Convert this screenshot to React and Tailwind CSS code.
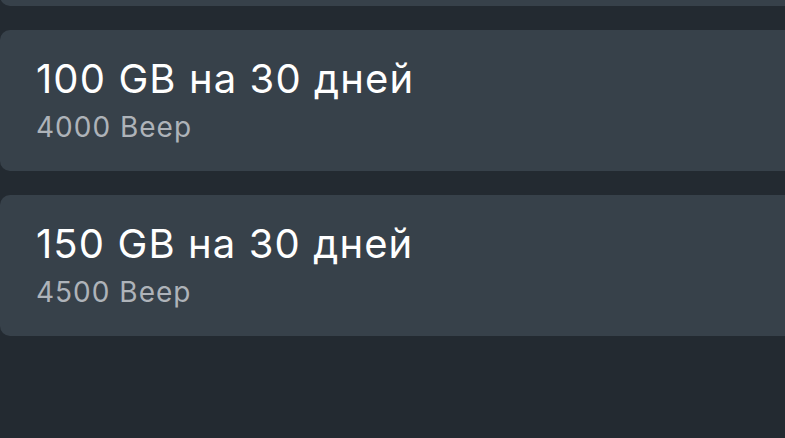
export default function App() {
  const items = [
    { title: "100 GB на 30 дней", price: "4000 Beep" },
    { title: "150 GB на 30 дней", price: "4500 Beep" },
  ];
  return (
    <div className="w-[785px] h-[438px] overflow-hidden bg-[#232a31] font-['Inter',sans-serif]">
      <div className="mt-[-134px] ml-0 mr-[-40px] flex flex-col gap-[24px]">
        <div className="h-[140px] rounded-[10px] bg-[#37414a]" />
        {items.map((it) => (
          <div key={it.title} className="h-[141px] rounded-[10px] bg-[#37414a] pl-[36px] pt-[25px]">
            <div className="text-[40px] leading-[48px] tracking-[1.1px] text-white">{it.title}</div>
            <div className="mt-[8px] text-[28px] leading-[32px] tracking-[1px] text-[#aeb3b9]">{it.price}</div>
          </div>
        ))}
      </div>
    </div>
  );
}
